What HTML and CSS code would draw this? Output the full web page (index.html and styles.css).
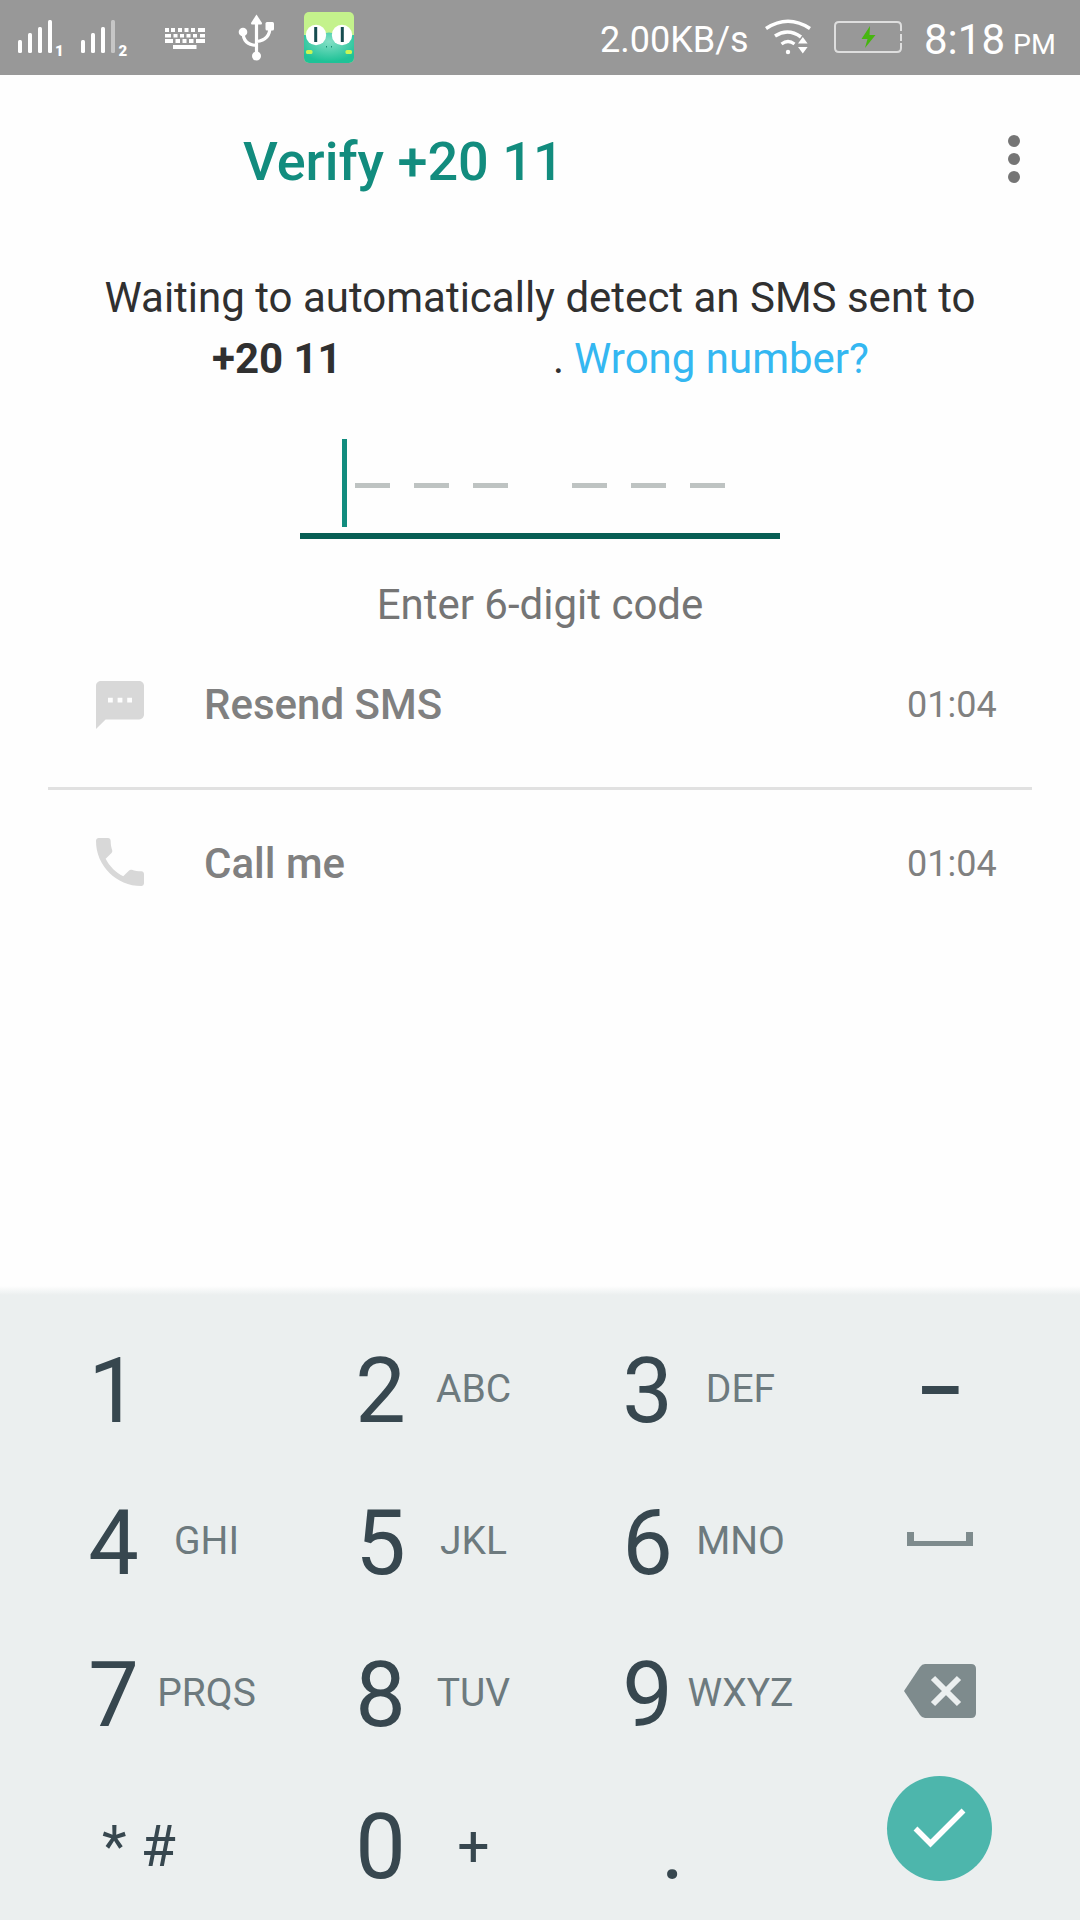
FILE: index.html
```html
<!DOCTYPE html>
<html lang="en">
<head>
<meta charset="utf-8">
<title>Verify</title>
<link rel="stylesheet" href="styles.css">
</head>
<body>
<div class="screen">
  <div class="status">
    <svg class="signal-one" width="50" height="75" viewBox="15 0 50 75">
      <g class="fill"><rect x="18" y="40" width="4" height="13" rx="1.5"/><rect x="28" y="33" width="4" height="20" rx="1.5"/><rect x="38" y="27" width="4" height="26" rx="1.5"/><rect x="48" y="20" width="4" height="33" rx="1.5"/></g>
      <text class="sim" x="55" y="56">1</text>
    </svg>
    <svg class="signal-two" width="52" height="75" viewBox="78 0 52 75">
      <g class="fill"><rect x="81" y="40" width="4" height="13" rx="1.5"/><rect x="91" y="33" width="4" height="20" rx="1.5"/><rect x="101" y="27" width="4" height="26" rx="1.5"/><rect x="111" y="20" width="4" height="33" rx="1.5" opacity=".45"/></g>
      <text class="sim" x="118.5" y="56">2</text>
    </svg>
    <svg class="keyboard-icon" width="40" height="75" viewBox="165 0 40 75">
      <path class="fill" d="M165 28h4v4h-4zM171 28h4v4h-4zM178 28h4v4h-4zM184.500 28h4v4h-4zM191 28h4v4h-4zM198 28h7v4h-7zM165 34h6v3.500h-6zM173.500 34h4v3.500h-4zM180 34h4v3.500h-4zM186.500 34h4v3.500h-4zM193 34h4v3.500h-4zM200 34h5v3.500h-5zM165 39h8v4h-8zM175.500 39h4.500v4h-4.500zM182.500 39h4v4h-4zM189 39h4.500v4h-4.500zM196 39h9v4h-9zM173 45h23.500v4H173z"/>
    </svg>
    <svg class="usb" width="38" height="75" viewBox="237 0 38 75">
      <path class="line" d="M256.500 20v36M243 32c0 8 4 13 13.500 13.500M270 27c0 8-4 13.500-13.500 14.500" stroke-width="3.200"/>
      <g class="fill"><path d="M256.500 14.500l5.500 8.500q0 1.500-1 1.500h-9q-1 0-1-1.500z"/><circle cx="243" cy="32" r="4.300"/><rect x="265.500" y="22" width="8.500" height="8.500" rx="1.500"/><circle cx="256.500" cy="56" r="4.500"/></g>
    </svg>
    <svg class="frog" width="50" height="75" viewBox="304 0 50 75">
      <defs>
        <radialGradient id="skin" cx=".5" cy=".3" r=".65"><stop offset="0" stop-color="#83dfc5"/><stop offset="1" stop-color="#1fc297"/></radialGradient>
        <clipPath id="tile"><rect x="304" y="12" width="50" height="51" rx="5"/></clipPath>
      </defs>
      <g clip-path="url(#tile)">
        <rect x="304" y="12" width="50" height="51" fill="#c4f28c"/>
        <path d="M304 35h16q9-5 18 0h16v28h-50z" fill="url(#skin)"/>
        <rect x="306" y="50" width="6.500" height="4" rx="1.500" fill="#c9f556"/><rect x="345.500" y="50" width="6.500" height="4" rx="1.500" fill="#c9f556"/>
      </g>
      <circle class="fill" cx="316" cy="35" r="10.200"/><circle class="fill" cx="342" cy="35" r="10.200"/>
      <path d="M315.700 27v15M342.300 27v15" stroke="#164d50" stroke-width="3" fill="none"/>
      <path d="M326.500 46v1.500M331.500 46v1.500" stroke="#168d72" stroke-width="1" fill="none"/>
    </svg>
    <span class="speed">2.00KB/s</span>
    <svg class="wifi" width="48" height="75" viewBox="764 0 48 75">
      <path class="line" d="M766 28.500Q788 14 810 28.500" stroke-width="3.600"/>
      <path class="line" d="M775 36Q788 27.500 801 37" stroke-width="3.500"/>
      <path class="line" d="M781.500 44Q788 39 794.500 44" stroke-width="3.200"/>
      <circle class="fill" cx="788" cy="52" r="2.200"/>
      <path class="fill" d="M798 43.500l4.800-6.500 4.800 6.500zM798 47h9.600l-4.800 6.500z"/>
    </svg>
    <svg class="battery" width="70" height="75" viewBox="833 0 70 75">
      <path d="M901 31v-5q0-4-4-4h-58q-4 0-4 4v22q0 4 4 4h58q4 0 4-4v-5M901 34v7" fill="none" stroke="#dedede" stroke-width="2"/>
      <path d="M870 26l-8.500 13h6l-2.500 9 10.500-13h-6z" fill="#46b60f"/>
    </svg>
    <span class="clock">8:18</span><span class="meridiem">PM</span>
  </div>

  <div class="header">
    <h1 class="title">Verify +20 11</h1>
    <svg class="menu" width="12" height="48" viewBox="0 0 12 48"><circle cx="6" cy="6" r="6"/><circle cx="6" cy="24" r="6"/><circle cx="6" cy="42" r="6"/></svg>
  </div>

  <div class="message">
    <div class="message-line">Waiting to automatically detect an SMS sent to</div>
    <div class="number-line"><b class="number">+20 11</b><span class="stop">.</span><a class="link">Wrong number?</a></div>
  </div>

  <div class="code">
    <span class="caret"></span>
    <span class="group"><i class="dash"></i><i class="dash"></i><i class="dash"></i></span>
    <span class="group"><i class="dash"></i><i class="dash"></i><i class="dash"></i></span>
  </div>
  <div class="hint">Enter 6-digit code</div>

  <div class="option resend">
    <svg class="option-icon" width="48" height="48" viewBox="2 2 20 20"><path d="M20 2H4c-1.100 0-1.990.9-1.990 2L2 22l4-4h14c1.100 0 2-.9 2-2V4c0-1.100-.9-2-2-2zM9 11H7V9h2v2zm4 0h-2V9h2v2zm4 0h-2V9h2v2z"/></svg>
    <span class="option-label">Resend SMS</span><span class="timer">01:04</span>
  </div>
  <div class="divider"></div>
  <div class="option call">
    <svg class="option-icon" width="48" height="48" viewBox="3 3 18 18"><path d="M6.620 10.790c1.440 2.830 3.760 5.140 6.590 6.590l2.200-2.200c.27-.27.67-.36 1.020-.24 1.120.37 2.330.57 3.570.57.55 0 1 .45 1 1V20c0 .55-.45 1-1 1-9.390 0-17-7.610-17-17 0-.55.45-1 1-1h3.500c.55 0 1 .45 1 1 0 1.250.2 2.450.57 3.570.11.35.03.74-.25 1.020l-2.200 2.200z"/></svg>
    <span class="option-label">Call me</span><span class="timer">01:04</span>
  </div>

  <div class="keypad">
    <div class="key"><span class="digit">1</span></div>
    <div class="key"><span class="digit">2</span><span class="letters">ABC</span></div>
    <div class="key"><span class="digit">3</span><span class="letters">DEF</span></div>
    <div class="key side"><span class="minus">–</span></div>

    <div class="key"><span class="digit">4</span><span class="letters">GHI</span></div>
    <div class="key"><span class="digit">5</span><span class="letters">JKL</span></div>
    <div class="key"><span class="digit">6</span><span class="letters">MNO</span></div>
    <div class="key side"><svg class="raised" width="66" height="14" viewBox="0 0 66 14"><path d="M0 0h7v9h52V0h7v14H0z"/></svg></div>

    <div class="key"><span class="digit">7</span><span class="letters">PRQS</span></div>
    <div class="key"><span class="digit">8</span><span class="letters">TUV</span></div>
    <div class="key"><span class="digit">9</span><span class="letters">WXYZ</span></div>
    <div class="key side"><svg class="raised" width="72" height="54" viewBox="0 0 72 54"><path d="M21 0h46q5 0 5 5v44q0 5-5 5H21q-3 0-5-3L0 27 16 3q2-3 5-3z"/><path class="cross" d="M29 14l26 26M55 14L29 40"/></svg></div>

    <div class="key"><span class="symbols">* #</span></div>
    <div class="key"><span class="digit">0</span><span class="plus">+</span></div>
    <div class="key"><span class="period">.</span></div>
    <div class="key side"><span class="done"><svg width="54" height="42" viewBox="0 0 54 42"><path class="check" d="M2.500 21.500L17.500 36.500 50.500 3.500"/></svg></span></div>
  </div>
</div>
</body>
</html>
```
FILE: styles.css
```css
* { box-sizing: border-box; }
body { margin: 0; background: #fefefe; font-family: Roboto, "Liberation Sans", sans-serif; }
svg { display: block; flex: none; }
.screen { width: 1080px; height: 1920px; overflow: hidden; display: flex; flex-direction: column; background: #fefefe; }
.screen > * { flex: none; }

.status { height: 75px; background: #989898; color: #fff; display: flex; align-items: center; padding-left: 15px; white-space: nowrap; }
.fill { fill: #fff; }
.line { fill: none; stroke: #fff; }
.sim { font-size: 15px; font-weight: 900; fill: #fff; }
.signal-two { margin-left: 13px; }
.keyboard-icon { margin-left: 35px; }
.usb { margin-left: 32px; }
.frog { margin-left: 29px; }
.speed { width: 164px; margin-left: 246px; font-size: 36px; line-height: 75px; padding-top: 6px; }
.battery { margin-left: 21px; }
.clock { width: 89px; margin-left: 21px; font-size: 42px; line-height: 75px; padding-top: 4px; }
.meridiem { font-size: 28.500px; line-height: 75px; padding-top: 13px; }

.header { display: flex; align-items: center; height: 168px; padding: 4px 60px 4px 243px; }
.title { margin: 0; flex: 1; padding-top: 5px; font-size: 54px; line-height: 64px; font-weight: 500; color: #128c7e; }
.menu { fill: #757575; }

.message { height: 122px; margin-top: 24px; font-size: 42px; line-height: 61px; color: #303030; white-space: nowrap; }
.message-line { text-align: center; }
.number-line { display: flex; padding-left: 212px; }
.number { width: 341px; font-weight: 700; }
.stop { width: 21px; }
.link { color: #34b7f1; }

.code { width: 480px; height: 100px; margin: 50px 0 0 300px; padding-left: 42px; border-bottom: 6px solid #075e54; display: flex; align-items: flex-start; }
.caret { flex: none; width: 5px; height: 88px; margin-right: 8px; background: #128c7e; }
.group { flex: none; display: flex; gap: 24px; margin-right: 64px; padding-top: 44px; }
.dash { width: 35px; height: 5px; background: #bec3c2; }
.hint { margin-top: 44px; font-size: 42px; line-height: 43px; text-align: center; color: #757575; }

.option { display: flex; align-items: center; padding-left: 96px; color: #808080; }
.resend { height: 158px; }
.call { height: 147px; }
.option-icon { fill: #d8d8d8; }
.call .option-icon { margin-bottom: 3px; }
.option-label { width: 703px; margin-left: 60px; font-size: 42px; font-weight: 500; }
.resend .option-label { margin-bottom: 2px; }
.timer { font-size: 36px; }
.divider { height: 3px; margin: 3px 48px 0; background: #e1e1e1; }

.keypad { height: 634px; margin-top: auto; padding: 29px 0 0 88px; display: grid; grid-template-columns: 267px 267px 265px 105px; grid-template-rows: repeat(4, 152px); background: linear-gradient(#fefefe, #ebefef 9px); color: #37474f; fill: #7e8b8d; overflow: hidden; }
.key { display: flex; align-items: center; }
.side { justify-content: center; }
.digit { width: 51px; padding-top: 2px; font-size: 90px; line-height: 150px; text-align: center; }
.letters { width: 135px; margin-bottom: 5px; text-align: center; font-size: 39px; color: #6d7a7e; }
.minus { font-size: 72px; font-weight: 700; line-height: 60px; }
.raised { margin-bottom: 8px; }
.cross { stroke: #ebefef; stroke-width: 6; }
.symbols { font-size: 57px; margin: 0 0 2px 14px; white-space: pre; }
.plus { width: 135px; text-align: center; font-size: 57px; margin-bottom: 1px; }
.period { width: 101px; text-align: center; font-size: 90px; }
.done { width: 105px; height: 105px; margin-bottom: 38px; border-radius: 50%; background: #4db6ac; display: flex; align-items: center; justify-content: center; }
.check { fill: none; stroke: #fff; stroke-width: 5.500; }
```
